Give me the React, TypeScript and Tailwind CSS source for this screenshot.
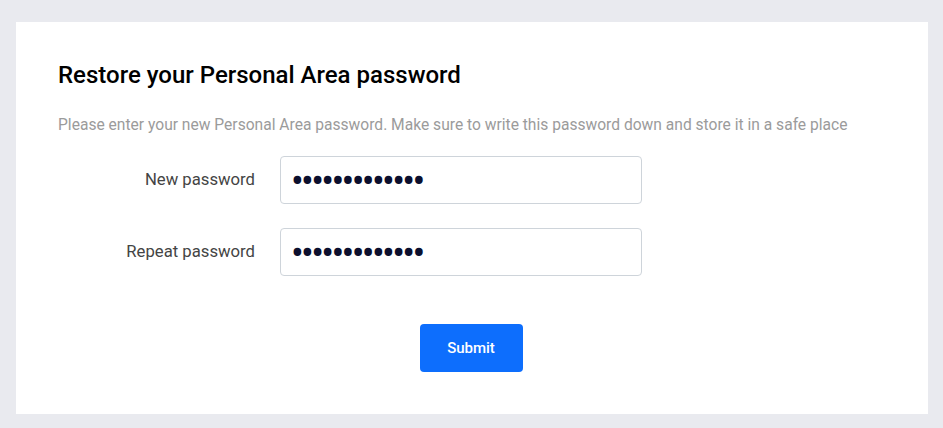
import { FC } from "react";

const Field: FC<{ label: string; value: string }> = ({ label, value }) => {
  return (
    <div className="flex items-center h-[48px]">
      <label className="w-[197px] text-right text-[16.7px] text-[#444]">
        {label}
      </label>
      <input
        type="password"
        defaultValue={value}
        readOnly
        className="ml-[25px] w-[362px] h-[48px] pl-[10px] pr-[13px] pt-[2px] rounded-[4px] border border-[#ced4da] bg-white text-[38px] leading-[44px] tracking-[-2.7px] text-[#0b0f2e] outline-none"
      />
    </div>
  );
};

export default function App() {
  return (
    <div
      className="min-h-[428px] bg-[#e9eaef] pl-[16px] pr-[15px] pt-[22px] pb-[14px]"
      style={{ fontFamily: "Roboto, 'Liberation Sans', sans-serif" }}
    >
      <div className="bg-white h-[392px] pl-[42px] pr-[44px] pt-[39px]">
        <h1 className="text-[24px] font-medium leading-[28px] text-black">
          Restore your Personal Area password
        </h1>
        <p className="mt-[25px] text-[15.6px] leading-[22px] text-[#9b9b9b]">
          Please enter your new Personal Area password. Make sure to write this
          password down and store it in a safe place
        </p>
        <div className="mt-[20px] flex flex-col gap-[24px]">
          <Field label="New password" value="aaaaaaaaaaaaa" />
          <Field label="Repeat password" value="aaaaaaaaaaaaa" />
        </div>
        <div className="mt-[48px] flex justify-center">
          <button
            type="button"
            className="w-[103px] h-[48px] rounded-[4px] bg-[#0d6efd] text-white text-[15px] font-medium"
          >
            Submit
          </button>
        </div>
      </div>
    </div>
  );
}
